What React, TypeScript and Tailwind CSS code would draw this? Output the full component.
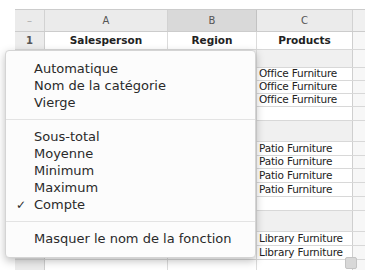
import React from "react";

const font = { fontFamily: '"DejaVu Sans", "Liberation Sans", sans-serif' };

type Row = { h: string; num?: string; a?: string; b?: string; c?: string; gray?: boolean; head?: boolean };

const rows: Row[] = [
  { h: "h-[18px]", num: "1", a: "Salesperson", b: "Region", c: "Products", head: true },
  { h: "h-[18px]", gray: true },
  { h: "h-[13px]", c: "Office Furniture" },
  { h: "h-[13px]", c: "Office Furniture" },
  { h: "h-[13px]", c: "Office Furniture" },
  { h: "h-[14px]" },
  { h: "h-[21px]", gray: true },
  { h: "h-[14px]", c: "Patio Furniture" },
  { h: "h-[13px]", c: "Patio Furniture" },
  { h: "h-[14px]", c: "Patio Furniture" },
  { h: "h-[14px]", c: "Patio Furniture" },
  { h: "h-[14px]" },
  { h: "h-[21px]", gray: true },
  { h: "h-[14px]", c: "Library Furniture" },
  { h: "h-[14px]", c: "Library Furniture" },
  { h: "h-[14px]" },
];

function Item({ label, checked }: { label: string; checked?: boolean }) {
  return (
    <div className="h-[17px] flex items-center relative pl-[28px] text-[13px] leading-none text-[#2a2a2a]">
      {checked && <span className="absolute left-[10px] text-[12px]">✓</span>}
      {label}
    </div>
  );
}

export default function App() {
  return (
    <div className="w-[365px] h-[270px] bg-white relative overflow-hidden" style={font}>
      <div className="pt-[9px] pl-[15px]">
        <div className="grid grid-cols-[30px_123px_89px_96px_12px] h-[23px] bg-[#ebebeb] border-y border-[#cccccc] text-[10px] text-[#555]">
          <div className="border-r border-[#d2d2d2] flex items-center justify-center text-[#aaa]">–</div>
          <div className="border-r border-[#d2d2d2] flex items-center justify-center">A</div>
          <div className="border-r border-[#c2c2c2] bg-[#d9d9d9] flex items-center justify-center">B</div>
          <div className="border-r border-[#d2d2d2] flex items-center justify-center">C</div>
          <div className="bg-[#f0f0f0]" />
        </div>
        {rows.map((r, i) => (
          <div key={i} className={`grid grid-cols-[30px_123px_89px_96px_12px] ${r.h} border-b border-[#d8d8d8]`}>
            <div className="bg-[#ececec] border-r border-[#cfcfcf] flex items-center justify-center text-[10px] font-bold text-[#555]">{r.num}</div>
            <div className={`border-r border-[#dcdcdc] flex items-center justify-center text-[10.5px] font-bold text-[#222] ${r.gray ? "bg-[#f1f1f1]" : ""}`}>{r.a}</div>
            <div className={`border-r border-[#dcdcdc] flex items-center justify-center text-[10.5px] font-bold text-[#222] ${r.gray ? "bg-[#f1f1f1]" : ""}`}>{r.b}</div>
            <div className={`border-r border-[#cfcfcf] flex items-center ${r.head ? "justify-center font-bold text-[10.5px]" : "pl-[2px] text-[10.5px] tracking-[-0.2px]"} text-[#222] whitespace-nowrap overflow-hidden ${r.gray ? "bg-[#f0f0f0]" : ""}`}>{r.c}</div>
            <div className="bg-[#f7f7f7]" />
          </div>
        ))}
      </div>
      <div className="absolute left-[345px] top-[257px] w-[12px] h-[12px] bg-[#d8d8d8] border border-[#c4c4c4] rounded-[2px]" />
      <div className="absolute left-[5px] top-[50px] w-[251px] h-[208px] bg-[#fcfcfc] rounded-[4px] border border-[#d4d4d4] shadow-[0_3px_8px_rgba(0,0,0,0.25)] pt-[9px]">
        <Item label="Automatique" />
        <Item label="Nom de la catégorie" />
        <Item label="Vierge" />
        <div className="my-[8px] h-px bg-[#e3e3e3]" />
        <Item label="Sous-total" />
        <Item label="Moyenne" />
        <Item label="Minimum" />
        <Item label="Maximum" />
        <Item label="Compte" checked />
        <div className="my-[8px] h-px bg-[#e3e3e3]" />
        <Item label="Masquer le nom de la fonction" />
      </div>
    </div>
  );
}
